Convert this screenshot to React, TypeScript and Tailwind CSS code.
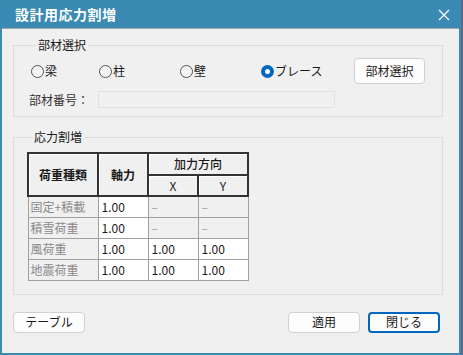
import React from 'react';

const font = { fontFamily: '"Noto Sans CJK JP", "Noto Sans", sans-serif' };

const Radio: React.FC<{ label: string; checked?: boolean; width?: string }> = ({ label, checked, width }) => (
  <label className={`flex items-center gap-[1px] text-[12px] text-[#1a1a1a] ${width ?? ''}`}>
    {checked ? (
      <span className="w-[13px] h-[13px] rounded-full bg-[#0067c0] flex items-center justify-center">
        <span className="w-[5px] h-[5px] rounded-full bg-white" />
      </span>
    ) : (
      <span className="w-[13px] h-[13px] rounded-full border border-[#555] bg-[#f5f5f5]" />
    )}
    <span className="leading-none">{label}</span>
  </label>
);

const Btn: React.FC<{ label: string; primary?: boolean; className?: string }> = ({ label, primary, className }) => (
  <button
    className={`h-[21px] w-[72px] rounded-[4px] bg-[#fdfdfd] text-[12px] text-[#1a1a1a] leading-none ${
      primary ? 'border-2 border-[#0067c0]' : 'border border-[#d0d0d0]'
    } ${className ?? ''}`}
  >
    {label}
  </button>
);

const rows = [
  { name: '固定+積載', n: '1.00', x: '–', y: '–', off: true },
  { name: '積雪荷重', n: '1.00', x: '–', y: '–', off: true },
  { name: '風荷重', n: '1.00', x: '1.00', y: '1.00', off: false },
  { name: '地震荷重', n: '1.00', x: '1.00', y: '1.00', off: false },
];

const head = 'border-2 border-[#333] bg-[#f0f0f0] text-center text-[12px] text-[#1a1a1a] shadow-[inset_1px_1px_0_#ffffff]';

export default function App() {
  return (
    <div className="w-[463px] h-[355px] bg-[#5b6a8a] overflow-hidden" style={font}>
      <div className="w-[461px] h-[355px] flex flex-col bg-[#3a8ab4] px-[2px] pb-[2px]">
        <div className="h-[28px] shrink-0 flex items-center justify-between pl-[13px] pr-[8px] text-white">
          <span className="text-[14px] font-bold tracking-[0.5px]">設計用応力割増</span>
          <svg width="14" height="14" viewBox="0 0 14 14" className="mb-[-2px]">
            <path d="M2 2 L12 12 M12 2 L2 12" stroke="#ffffff" strokeWidth="1.3" />
          </svg>
        </div>
        <div className="flex-1 bg-[#f0f0f0] border-t border-[#9aa5ad] flex flex-col px-[11px] pt-[8px]">
          <fieldset className="border border-[#dcdcdc] pl-[17px] pr-[17px] pb-[8px] w-[430px]">
            <legend className="ml-[5px] px-[2px] text-[12px] leading-[16px] text-[#1a1a1a]">部材選択</legend>
            <div className="flex items-center h-[26px] mt-[5px]">
              <Radio label="梁" width="w-[68px]" />
              <Radio label="柱" width="w-[81px]" />
              <Radio label="壁" width="w-[81px]" />
              <Radio label="ブレース" checked />
              <button className="ml-auto h-[26px] w-[71px] rounded-[4px] bg-[#fdfdfd] border border-[#d0d0d0] text-[12px] text-[#1a1a1a]">
                部材選択
              </button>
            </div>
            <div className="flex items-center mt-[7px] h-[17px]">
              <span className="w-[69px] text-[12px] text-[#333] -ml-[2px]">部材番号：</span>
              <div className="w-[237px] h-[17px] border border-[#e2e2e2] bg-[#f0f0f0]" />
            </div>
          </fieldset>

          <fieldset className="border border-[#dcdcdc] mt-[12px] pl-[13px] pt-[7px] pb-[13px] w-[430px]">
            <legend className="ml-[5px] px-[2px] text-[12px] leading-[16px] text-[#1a1a1a]">応力割増</legend>
            <table className="border-collapse table-fixed w-[220px]">
              <colgroup>
                <col className="w-[70px]" />
                <col className="w-[50px]" />
                <col className="w-[50px]" />
                <col className="w-[50px]" />
              </colgroup>
              <thead>
                <tr className="h-[22px]">
                  <th rowSpan={2} className={`${head} font-bold`}>荷重種類</th>
                  <th rowSpan={2} className={`${head} font-bold`}>軸力</th>
                  <th colSpan={2} className={`${head} font-medium`}>加力方向</th>
                </tr>
                <tr className="h-[21px]">
                  <th className={`${head} font-normal`}>X</th>
                  <th className={`${head} font-normal`}>Y</th>
                </tr>
              </thead>
              <tbody>
                {rows.map(r => (
                  <tr key={r.name} className="h-[21px] text-[12px] leading-none">
                    <td className="border border-[#a0a0a0] bg-[#f0f0f0] text-[#8a8a8a] pl-[2px] whitespace-nowrap">{r.name}</td>
                    <td className="border border-[#a0a0a0] bg-white text-[#1a1a1a] pl-[3px]">{r.n}</td>
                    <td className={`border border-[#a0a0a0] pl-[3px] ${r.off ? 'bg-[#f0f0f0] text-[#a0a0a0]' : 'bg-white text-[#1a1a1a]'}`}>{r.x}</td>
                    <td className={`border border-[#a0a0a0] pl-[3px] ${r.off ? 'bg-[#f0f0f0] text-[#a0a0a0]' : 'bg-white text-[#1a1a1a]'}`}>{r.y}</td>
                  </tr>
                ))}
              </tbody>
            </table>
          </fieldset>

          <div className="flex items-center mt-[17px] w-[430px]">
            <Btn label="テーブル" />
            <Btn label="適用" className="ml-auto" />
            <Btn label="閉じる" primary className="ml-[8px] mr-[3px]" />
          </div>
        </div>
      </div>
    </div>
  );
}
